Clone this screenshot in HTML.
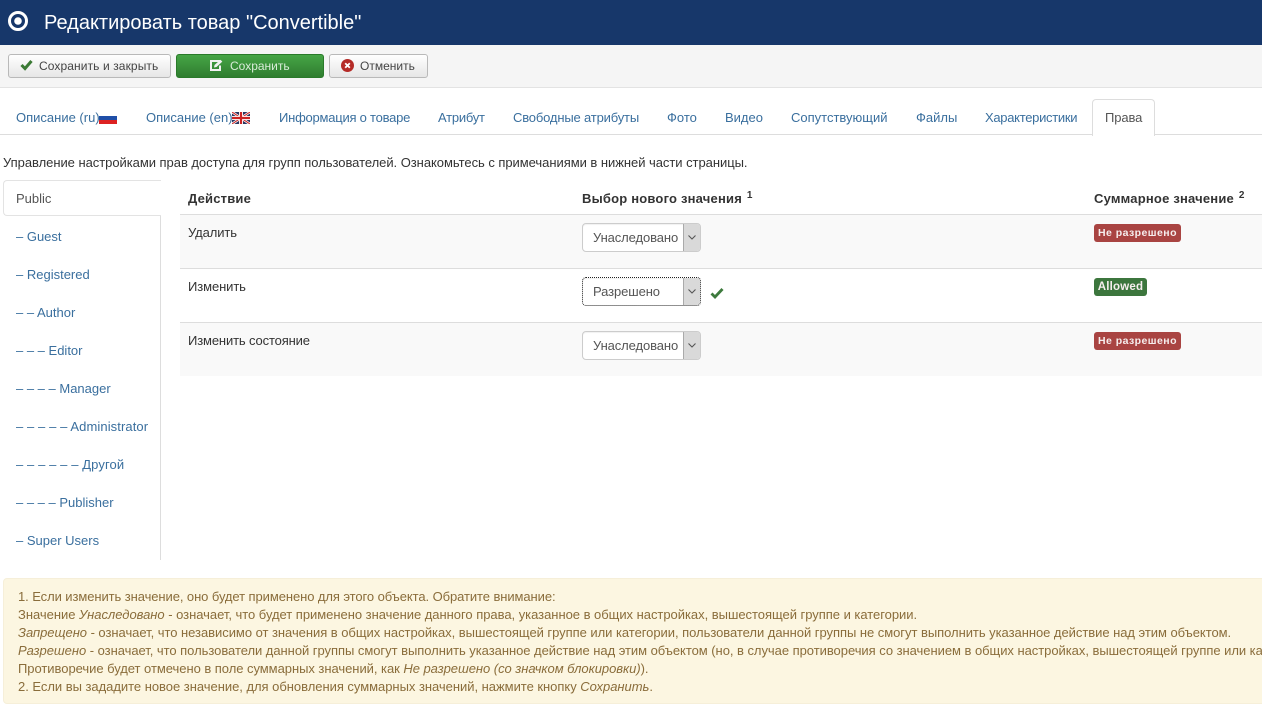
<!DOCTYPE html>
<html lang="ru"><head><meta charset="utf-8"><title>Редактировать товар</title>
<style>
html,body{margin:0;padding:0;background:#fff}
body{width:1262px;height:709px;overflow:hidden;position:relative;font-family:"Liberation Sans",Arial,sans-serif;font-size:13px;color:#333}
.a{position:absolute;white-space:nowrap;line-height:18px}
.tab{top:109px;color:#3a6f9e}
.side{left:16px;color:#3a6f9e}
.btn{position:absolute;top:54px;height:22px;border:1px solid #b9b9b9;border-radius:3px;background:linear-gradient(#fff,#e6e6e6);box-sizing:content-box}
.b{font-size:12px}
.sel{position:absolute;left:582px;width:117px;height:27px;border:1px solid #ccc;border-radius:4px;background:#fff;box-shadow:inset 0 1px 1px rgba(0,0,0,.06)}
.sel span{position:absolute;left:10px;top:5px;line-height:18px;color:#555;letter-spacing:-.1px}
.sel i{position:absolute;right:0;top:0;width:16px;height:27px;background:#d9d9d9;border-left:1px solid #aaa;border-radius:0 3px 3px 0}
.sel svg{position:absolute;right:3px;top:10px}
.th{font-weight:bold;top:190px;color:#333;letter-spacing:.2px}
.th sup{font-size:10px;line-height:0;margin-left:1px}
.lab{position:absolute;border-radius:3px;color:#f6eeee;font-weight:bold;font-size:10.5px;text-align:center;letter-spacing:.45px}
.row{position:absolute;left:180px;width:1082px}
.w{left:18px;color:#8a6d3b}
</style></head><body>
<div style="position:absolute;left:0;top:0;width:1262px;height:45px;background:#17376a"></div>
<svg style="position:absolute;left:7px;top:10px" width="22" height="22" viewBox="0 0 22 22"><circle cx="11" cy="11" r="8.5" fill="none" stroke="#fff" stroke-width="3"/><circle cx="11" cy="11" r="3.800" fill="#fff"/></svg>
<div class="a" style="left:44px;top:11px;font-size:20px;line-height:24px;color:#fff">Редактировать товар "Convertible"</div>

<div style="position:absolute;left:0;top:45px;width:1262px;height:43px;background:#f5f5f5;border-bottom:1px solid #e3e3e3;box-sizing:border-box"></div>
<div class="btn" style="left:8px;width:161px"></div>
<svg style="position:absolute;left:20px;top:59px" width="13" height="12" viewBox="0 0 13 12"><path d="M1.500 6L5 9.500L11.500 2" fill="none" stroke="#3b7a35" stroke-width="3"/></svg>
<div class="a b" style="left:39px;top:57px;color:#444;letter-spacing:.1px">Сохранить и закрыть</div>
<div class="btn" style="left:176px;width:146px;background:linear-gradient(#46a546,#2f7d2f);border-color:#2a7a2a"></div>
<svg style="position:absolute;left:210px;top:59px" width="13" height="12" viewBox="0 0 13 12"><path d="M10 2H1v9h9V6.500" fill="none" stroke="#f2f2f2" stroke-width="2"/><path d="M4.500 6L10.500.8 12.300 2.600 6.500 8 4 8.500z" fill="#f2f2f2"/></svg>
<div class="a b" style="left:230px;top:57px;color:#d8ecd8">Сохранить</div>
<div class="btn" style="left:329px;width:97px"></div>
<svg style="position:absolute;left:341px;top:59px" width="13" height="13" viewBox="0 0 13 13"><circle cx="6.500" cy="6.500" r="6.500" fill="#b52b27"/><path d="M4.200 4.200L8.800 8.800M8.800 4.200L4.200 8.800" stroke="#fff" stroke-width="1.800"/></svg>
<div class="a b" style="left:360px;top:57px;color:#444">Отменить</div>

<div style="position:absolute;left:0;top:134px;width:1262px;height:1px;background:#ddd"></div>
<div class="a tab" style="left:16px">Описание (ru)</div>
<svg style="position:absolute;left:99px;top:112px" width="18" height="12" viewBox="0 0 18 12"><rect width="18" height="4" fill="#fff"/><rect y="4" width="18" height="4" fill="#1f4fa8"/><rect y="8" width="18" height="4" fill="#d22"/></svg>
<div class="a tab" style="left:146px">Описание (en)</div>
<svg style="position:absolute;left:232px;top:112px" width="18" height="12" viewBox="0 0 18 12"><rect width="18" height="12" fill="#2a3560"/><path d="M0 0L18 12M18 0L0 12" stroke="#fff" stroke-width="2.500"/><path d="M0 0L18 12M18 0L0 12" stroke="#c22" stroke-width="1"/><path d="M9 0V12M0 6H18" stroke="#fff" stroke-width="4"/><path d="M9 0V12M0 6H18" stroke="#c22" stroke-width="2.200"/></svg>
<div class="a tab" style="left:279px;letter-spacing:-.23px">Информация о товаре</div>
<div class="a tab" style="left:438px;letter-spacing:-.25px">Атрибут</div>
<div class="a tab" style="left:513px;letter-spacing:-.17px">Свободные атрибуты</div>
<div class="a tab" style="left:667px">Фото</div>
<div class="a tab" style="left:725px">Видео</div>
<div class="a tab" style="left:791px">Сопутствующий</div>
<div class="a tab" style="left:916px">Файлы</div>
<div class="a tab" style="left:985px;letter-spacing:-.3px">Характеристики</div>
<div style="position:absolute;left:1092px;top:99px;width:61px;height:36px;background:#fff;border:1px solid #ddd;border-bottom:0;border-radius:4px 4px 0 0"></div>
<div class="a" style="left:1105px;top:109px;color:#555;letter-spacing:-.1px">Права</div>

<div class="a" style="left:3px;top:154px;color:#333;letter-spacing:-.04px">Управление настройками прав доступа для групп пользователей. Ознакомьтесь с примечаниями в нижней части страницы.</div>

<div style="position:absolute;left:160px;top:216px;width:1px;height:344px;background:#ddd"></div>
<div style="position:absolute;left:3px;top:180px;width:157px;height:34px;background:#fff;border:1px solid #e3e3e3;border-right:0;border-radius:4px 0 0 4px"></div>
<div class="a" style="left:16px;top:190px;color:#555">Public</div>
<div class="a side" style="top:228px">– Guest</div>
<div class="a side" style="top:266px">– Registered</div>
<div class="a side" style="top:304px">– – Author</div>
<div class="a side" style="top:342px">– – – Editor</div>
<div class="a side" style="top:380px">– – – – Manager</div>
<div class="a side" style="top:418px;letter-spacing:.09px">– – – – – Administrator</div>
<div class="a side" style="top:456px;letter-spacing:.1px">– – – – – – Другой</div>
<div class="a side" style="top:494px">– – – – Publisher</div>
<div class="a side" style="top:532px">– Super Users</div>

<div class="row" style="top:214px;height:54px;background:#f9f9f9;border-top:1px solid #ddd;box-sizing:border-box"></div>
<div class="row" style="top:268px;height:54px;background:#fff;border-top:1px solid #ddd;box-sizing:border-box"></div>
<div class="row" style="top:322px;height:54px;background:#f9f9f9;border-top:1px solid #ddd;box-sizing:border-box"></div>

<div class="a th" style="left:188px">Действие</div>
<div class="a th" style="left:582px">Выбор нового значения <sup>1</sup></div>
<div class="a th" style="left:1094px">Суммарное значение <sup>2</sup></div>

<div class="a" style="left:188px;top:224px;letter-spacing:-.1px">Удалить</div>
<div class="a" style="left:188px;top:278px;letter-spacing:-.1px">Изменить</div>
<div class="a" style="left:188px;top:332px;letter-spacing:-.14px">Изменить состояние</div>

<div class="sel" style="top:223px"><span>Унаследовано</span><i></i><svg width="10" height="7" viewBox="0 0 10 7"><path d="M1.500 1.500L5 5 8.500 1.500" fill="none" stroke="#555" stroke-width="1.100"/></svg></div>
<div class="sel" style="top:277px;border:1px dotted #222"><span>Разрешено</span><i></i><svg width="10" height="7" viewBox="0 0 10 7"><path d="M1.500 1.500L5 5 8.500 1.500" fill="none" stroke="#555" stroke-width="1.100"/></svg></div>
<svg style="position:absolute;left:710px;top:287px" width="14" height="12" viewBox="0 0 14 12"><path d="M1.500 6.500L5 10L12.500 2" fill="none" stroke="#3d7a3d" stroke-width="2.800"/></svg>
<div class="sel" style="top:331px"><span>Унаследовано</span><i></i><svg width="10" height="7" viewBox="0 0 10 7"><path d="M1.500 1.500L5 5 8.500 1.500" fill="none" stroke="#555" stroke-width="1.100"/></svg></div>

<div class="lab" style="left:1094px;top:224px;width:87px;height:18px;line-height:18px;background:#a94442">Не разрешено</div>
<div class="lab" style="left:1094px;top:278px;width:53px;height:18px;line-height:18px;background:#3c763d;font-size:11.500px;letter-spacing:.2px">Allowed</div>
<div class="lab" style="left:1094px;top:332px;width:87px;height:18px;line-height:18px;background:#a94442">Не разрешено</div>

<div style="position:absolute;left:3px;top:578px;width:1270px;height:126px;background:#fcf6e1;border:1px solid #f6efd9;border-radius:4px;box-sizing:border-box"></div>
<div class="a w" style="top:588px;letter-spacing:-.08px">1. Если изменить значение, оно будет применено для этого объекта. Обратите внимание:</div>
<div class="a w" style="top:606px;letter-spacing:-.03px">Значение <i>Унаследовано</i> - означает, что будет применено значение данного права, указанное в общих настройках, вышестоящей группе и категории.</div>
<div class="a w" style="top:624px;letter-spacing:-.04px"><i>Запрещено</i> - означает, что независимо от значения в общих настройках, вышестоящей группе или категории, пользователи данной группы не смогут выполнить указанное действие над этим объектом.</div>
<div class="a w" style="top:642px;letter-spacing:-.04px"><i>Разрешено</i> - означает, что пользователи данной группы смогут выполнить указанное действие над этим объектом (но, в случае противоречия со значением в общих настройках, вышестоящей группе или категории</div>
<div class="a w" style="top:660px;letter-spacing:-.04px">Противоречие будет отмечено в поле суммарных значений, как <i>Не разрешено (со значком блокировки)</i>).</div>
<div class="a w" style="top:678px;letter-spacing:-.03px">2. Если вы зададите новое значение, для обновления суммарных значений, нажмите кнопку <i>Сохранить</i>.</div>
</body></html>
